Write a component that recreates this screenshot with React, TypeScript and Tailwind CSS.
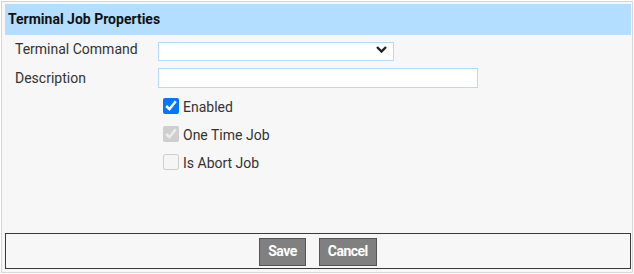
export default function App() {
  return (
    <div className="w-[634px] h-[274px] bg-white overflow-hidden" style={{ fontFamily: 'Roboto, "Liberation Sans", sans-serif' }}>
      <div className="ml-[1px] mt-[1px] w-[632px] h-[272px] border border-[#d6d6d6] bg-[#f7f7f7] pl-[3px] pr-[1px] pt-[2px] pb-[3px] flex flex-col">
        <div className="h-[31px] bg-[#b3deff] flex items-center pl-[3px]">
          <span className="text-[14px] font-bold text-[#111]">Terminal Job Properties</span>
        </div>

        <div className="flex-1 pt-[5px]">
          <div className="flex items-center h-[19px]">
            <label className="w-[153px] pl-[10px] text-[14px] text-[#333]">Terminal Command</label>
            <div className="relative w-[236px] h-[19px]">
              <select className="w-full h-full appearance-none border border-[#b3dcf7] bg-white text-[13px] outline-none">
                <option></option>
              </select>
              <svg className="absolute right-[7px] top-[6px] pointer-events-none" width="11" height="7" viewBox="0 0 11 7">
                <path d="M1 1 L5.5 5.5 L10 1" fill="none" stroke="#222" strokeWidth="2.4" />
              </svg>
            </div>
          </div>
          <div className="flex items-center h-[20px] mt-[9px]">
            <label className="w-[153px] pl-[10px] text-[14px] text-[#333]">Description</label>
            <input type="text" className="w-[320px] h-[20px] border border-[#b3dcf7] bg-white text-[13px] outline-none" />
          </div>

          <div className="pl-[158px] mt-[10px] flex flex-col gap-[12px]">
            <label className="flex items-center gap-[4px] h-[16px] text-[14px] text-[#333]">
              <input type="checkbox" defaultChecked className="w-4 h-4 m-0" />
              <span className="mt-[3px]">Enabled</span>
            </label>
            <label className="flex items-center gap-[4px] h-[16px] text-[14px] text-[#333]">
              <input type="checkbox" defaultChecked disabled className="w-4 h-4 m-0" />
              <span className="mt-[3px]">One Time Job</span>
            </label>
            <label className="flex items-center gap-[4px] h-[16px] text-[14px] text-[#333]">
              <input type="checkbox" disabled className="w-4 h-4 m-0" />
              <span className="mt-[3px]">Is Abort Job</span>
            </label>
          </div>
        </div>

        <div className="h-[36px] border border-[#3a3a3a] flex items-center justify-center gap-[13px] pt-[1px]">
          <button className="h-[28px] px-[8px] bg-[#808080] border border-[#555] text-white text-[14px] font-bold tracking-[-0.5px]">Save</button>
          <button className="h-[28px] px-[8px] bg-[#808080] border border-[#555] text-white text-[14px] font-bold tracking-[-0.5px]">Cancel</button>
        </div>
      </div>
    </div>
  );
}
